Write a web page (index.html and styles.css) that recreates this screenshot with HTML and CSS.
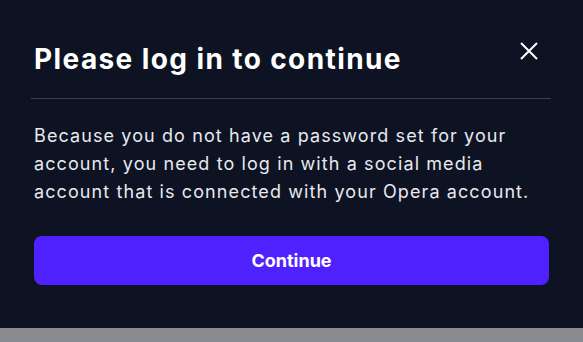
FILE: index.html
```html
<!DOCTYPE html>
<html lang="en">
<head>
<meta charset="utf-8">
<title>Please log in to continue</title>
<link rel="stylesheet" href="styles.css">
</head>
<body>
<div class="modal">
  <div class="header">
    <h1 class="title">Please log in to continue</h1>
    <button class="close" aria-label="Close">
      <svg width="18" height="18" viewBox="0 0 18 18"><path d="M1 1L17 17M17 1L1 17" stroke="#ffffff" stroke-width="2" fill="none"/></svg>
    </button>
  </div>
  <div class="divider"></div>
  <p class="text">Because you do not have a password set for your account, you need to log in with a social media account that is connected with your Opera account.</p>
  <button class="primary">Continue</button>
</div>
<div class="strip"></div>
</body>
</html>
```
FILE: styles.css
```css
* { box-sizing: border-box; }
html, body { margin: 0; padding: 0; }
body {
  background: #0d1322;
  font-family: Inter, "Noto Sans", sans-serif;
  width: 583px;
  height: 342px;
  overflow: hidden;
}
.modal {
  height: 328px;
  padding: 41px 32px 0 31px;
  display: flex;
  flex-direction: column;
}
.header {
  display: flex;
  align-items: center;
  justify-content: space-between;
  padding-left: 3px;
}
.title {
  margin: 0;
  font-size: 28px;
  line-height: 36px;
  font-weight: 700;
  letter-spacing: 1.4px;
  color: #ffffff;
}
.close {
  background: none;
  border: 0;
  padding: 0;
  width: 18px;
  height: 18px;
  margin-right: 13px;
  margin-top: -16px;
  display: flex;
}
.divider {
  height: 1px;
  background: #3a3f4f;
  margin-top: 21px;
  width: 520px;
}
.text {
  margin: 23px 0 0 3px;
  font-size: 18px;
  line-height: 28px;
  letter-spacing: 1.1px;
  color: #e8e9ee;
}
.primary {
  margin: 30px 0 0 3px;
  width: 515px;
  height: 49px;
  border: 0;
  border-radius: 8px;
  background: #5021ff;
  color: #ffffff;
  font-family: Inter, "Noto Sans", sans-serif;
  font-weight: 700;
  font-size: 18px;
}
.strip {
  height: 14px;
  background: #898b90;
}
```
